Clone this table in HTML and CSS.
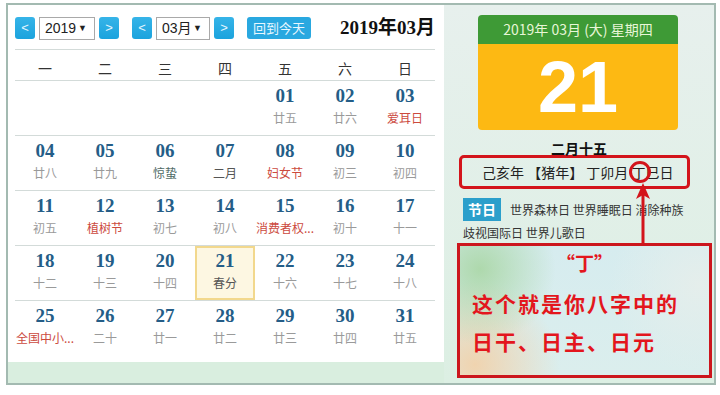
FILE: index.html
```html
<!DOCTYPE html>
<html lang="zh">
<head>
<meta charset="utf-8">
<link rel="stylesheet" href="styles.css">
</head>
<body>
<div class="frame">
  <div class="left">
    <div class="cal">
      <div class="toolbar">
        <span class="nav">&lt;</span>
        <span class="sel sel-year">2019<i>▼</i></span>
        <span class="nav">&gt;</span>
        <span class="nav nav-gap">&lt;</span>
        <span class="sel sel-month">03月<i>▼</i></span>
        <span class="nav">&gt;</span>
        <span class="today-btn">回到今天</span>
        <span class="title">2019年03月</span>
      </div>
      <div class="week">
        <span>一</span><span>二</span><span>三</span><span>四</span><span>五</span><span>六</span><span>日</span>
      </div>
      <div class="row">
        <div class="cell"></div><div class="cell"></div><div class="cell"></div><div class="cell"></div>
        <div class="cell"><b class="num">01</b><span class="lun">廿五</span></div>
        <div class="cell"><b class="num">02</b><span class="lun">廿六</span></div>
        <div class="cell"><b class="num">03</b><span class="lun fest">爱耳日</span></div>
      </div>
      <div class="row">
        <div class="cell"><b class="num">04</b><span class="lun">廿八</span></div>
        <div class="cell"><b class="num">05</b><span class="lun">廿九</span></div>
        <div class="cell"><b class="num">06</b><span class="lun term">惊蛰</span></div>
        <div class="cell"><b class="num">07</b><span class="lun dark">二月</span></div>
        <div class="cell"><b class="num">08</b><span class="lun fest">妇女节</span></div>
        <div class="cell"><b class="num">09</b><span class="lun">初三</span></div>
        <div class="cell"><b class="num">10</b><span class="lun">初四</span></div>
      </div>
      <div class="row">
        <div class="cell"><b class="num">11</b><span class="lun">初五</span></div>
        <div class="cell"><b class="num">12</b><span class="lun fest">植树节</span></div>
        <div class="cell"><b class="num">13</b><span class="lun">初七</span></div>
        <div class="cell"><b class="num">14</b><span class="lun">初八</span></div>
        <div class="cell"><b class="num">15</b><span class="lun fest">消费者权...</span></div>
        <div class="cell"><b class="num">16</b><span class="lun">初十</span></div>
        <div class="cell"><b class="num">17</b><span class="lun">十一</span></div>
      </div>
      <div class="row">
        <div class="cell"><b class="num">18</b><span class="lun">十二</span></div>
        <div class="cell"><b class="num">19</b><span class="lun">十三</span></div>
        <div class="cell"><b class="num">20</b><span class="lun">十四</span></div>
        <div class="cell cur"><b class="num">21</b><span class="lun dark">春分</span></div>
        <div class="cell"><b class="num">22</b><span class="lun">十六</span></div>
        <div class="cell"><b class="num">23</b><span class="lun">十七</span></div>
        <div class="cell"><b class="num">24</b><span class="lun">十八</span></div>
      </div>
      <div class="row">
        <div class="cell"><b class="num">25</b><span class="lun fest">全国中小...</span></div>
        <div class="cell"><b class="num">26</b><span class="lun">二十</span></div>
        <div class="cell"><b class="num">27</b><span class="lun">廿一</span></div>
        <div class="cell"><b class="num">28</b><span class="lun">廿二</span></div>
        <div class="cell"><b class="num">29</b><span class="lun">廿三</span></div>
        <div class="cell"><b class="num">30</b><span class="lun">廿四</span></div>
        <div class="cell"><b class="num">31</b><span class="lun">廿五</span></div>
      </div>
    </div>
    <div class="strip"></div>
  </div>
  <div class="right">
    <div class="card">
      <div class="card-head">2019年 03月 (大) 星期四</div>
      <div class="card-body">21</div>
    </div>
    <div class="lunar">二月十五</div>
    <div class="ganzhi">己亥年 【猪年】 丁卯月 丁巳日</div>
    <div class="fest-block"><span class="badge">节日</span>世界森林日 世界睡眠日 消除种族<br>歧视国际日 世界儿歌日</div>
    <div class="note">
      <div class="note-q">“丁”</div>
      <div class="note-line">这个就是你八字中的</div>
      <div class="note-line">日干、日主、日元</div>
    </div>
    <svg class="overlay" width="270" height="378" viewBox="0 0 270 378">
      <circle cx="196" cy="167" r="9.5" fill="none" stroke="#d3141b" stroke-width="3"/>
      <line x1="199" y1="188" x2="199" y2="239" stroke="#d3141b" stroke-width="3"/>
      <polygon points="199,178 192,194 199,190 206,194" fill="#d3141b"/>
    </svg>
  </div>
</div>
</body>
</html>
```

FILE: styles.css
```css
* { box-sizing: border-box; }
html, body { margin: 0; padding: 0; background: #fff; }
body { font-family: "Noto Sans CJK SC", "Liberation Sans", sans-serif; }

.frame {
  margin: 3px 0 0 6px;
  width: 710px;
  height: 382px;
  border: 2px solid #a3bab1;
  display: flex;
  background: linear-gradient(#e7f0ed, #dcefe3);
}

.left { width: 436px; display: flex; flex-direction: column; }
.cal { background: #fff; height: 357px; padding: 11px 9px 0 7px; }
.strip { flex: 1; background: #d9eedf; }

.toolbar { display: flex; align-items: center; height: 24px; margin-bottom: 9px; }
.nav {
  width: 20px; height: 22px; border-radius: 3px;
  background: linear-gradient(#36b4e8, #1ba3dd);
  color: #e6f6ff; font: 13px/22px "Liberation Sans", sans-serif; text-align: center;
  margin-right: 4px; flex: none;
}
.nav-gap { margin-left: 9px; }
.sel {
  height: 23px; border: 1px solid #a9a9a9; background: #fff;
  font: 14px/21px "Liberation Sans", "Noto Sans CJK SC", sans-serif; color: #222;
  padding: 0 0 0 5px; margin-right: 4px; display: flex; align-items: center;
  white-space: nowrap; flex: none;
}
.sel i { font-style: normal; font-size: 9px; margin-left: auto; margin-right: 7px; }
.sel-year { width: 56px; }
.sel-month { width: 54px; }
.today-btn {
  margin-left: 9px; height: 22px; width: 64px; border-radius: 3px; flex: none;
  background: #29a8e0; color: #e8f7ff; font-size: 13px; line-height: 22px; text-align: center;
}
.title {
  margin-left: auto; font: bold 19px/24px "Liberation Serif", "Noto Sans CJK SC", serif; color: #111;
  white-space: nowrap;
}

.week, .row {
  display: grid; grid-template-columns: repeat(7, 60px);
  border-top: 1px solid #d3dbd9; width: 420px;
}
.week { height: 31px; padding-top: 8px; }
.week span { text-align: center; font-size: 14px; line-height: 20px; color: #333; }
.row { height: 55px; }
.cell { display: flex; flex-direction: column; align-items: center; padding-top: 4px; }
.num { font: bold 19px/22px "Liberation Serif", serif; color: #245d87; }
.lun { font-size: 12px; line-height: 16px; margin-top: 3px; color: #9a9a9a; white-space: nowrap; }
.lun.fest { color: #cc4a3e; }
.lun.term { color: #4f6b66; }
.lun.dark { color: #555; }
.cell.cur { border: 2px solid #f2d88d; background: #fdf7e2; padding-top: 2px; }

.right { position: relative; flex: 1; padding-top: 10px; }
.card { margin-left: 34px; width: 200px; border-radius: 4px; overflow: hidden; }
.card-head {
  height: 29px; background: #3e9a36; color: #e8f6d6;
  font-size: 14px; line-height: 29px; text-align: center;
}
.card-body {
  height: 86px; background: #fdb913; color: #fff;
  font: bold 72px/86px "Liberation Sans", sans-serif; text-align: center;
}
.lunar { margin-top: 11px; text-align: center; font-size: 14px; line-height: 14px; font-weight: bold; color: #111; }
.ganzhi {
  margin-left: 15px; width: 231px; height: 34px;
  border: 3px solid #d3141b; border-radius: 5px;
  font-size: 14px; line-height: 28px; color: #222; padding-left: 20px; white-space: nowrap;
}
.fest-block { margin: 9px 0 0 19px; font-size: 12px; line-height: 23px; color: #333; white-space: nowrap; }
.badge {
  display: inline-block; height: 23px; line-height: 23px; padding: 0 5px; margin-right: 9px;
  background: #2b9fcb; color: #fff; font-size: 14px; font-weight: bold; vertical-align: top;
}
.note {
  margin: -1px 0 0 13px; width: 255px; height: 135px;
  border: 3px solid #cc161d;
  background:
    radial-gradient(circle at 8% 18%, rgba(160, 210, 150, 0.75), rgba(160, 210, 150, 0) 30%),
    radial-gradient(circle at 6% 92%, rgba(245, 205, 160, 0.8), rgba(245, 205, 160, 0) 32%),
    radial-gradient(circle at 96% 30%, rgba(230, 238, 235, 0.9), rgba(230, 238, 235, 0) 35%),
    linear-gradient(#d6ecef, #dbeeed);
  color: #e3161d; padding: 4px 0 0 12px;
}
.note-q { text-align: center; font-size: 19px; line-height: 26px; font-weight: bold; padding-right: 12px; }
.note-line { font-size: 21px; font-weight: bold; letter-spacing: 2px; line-height: 38px; }
.note-q + .note-line { margin-top: 8px; }
.overlay { position: absolute; left: 0; top: 0; pointer-events: none; }
```
